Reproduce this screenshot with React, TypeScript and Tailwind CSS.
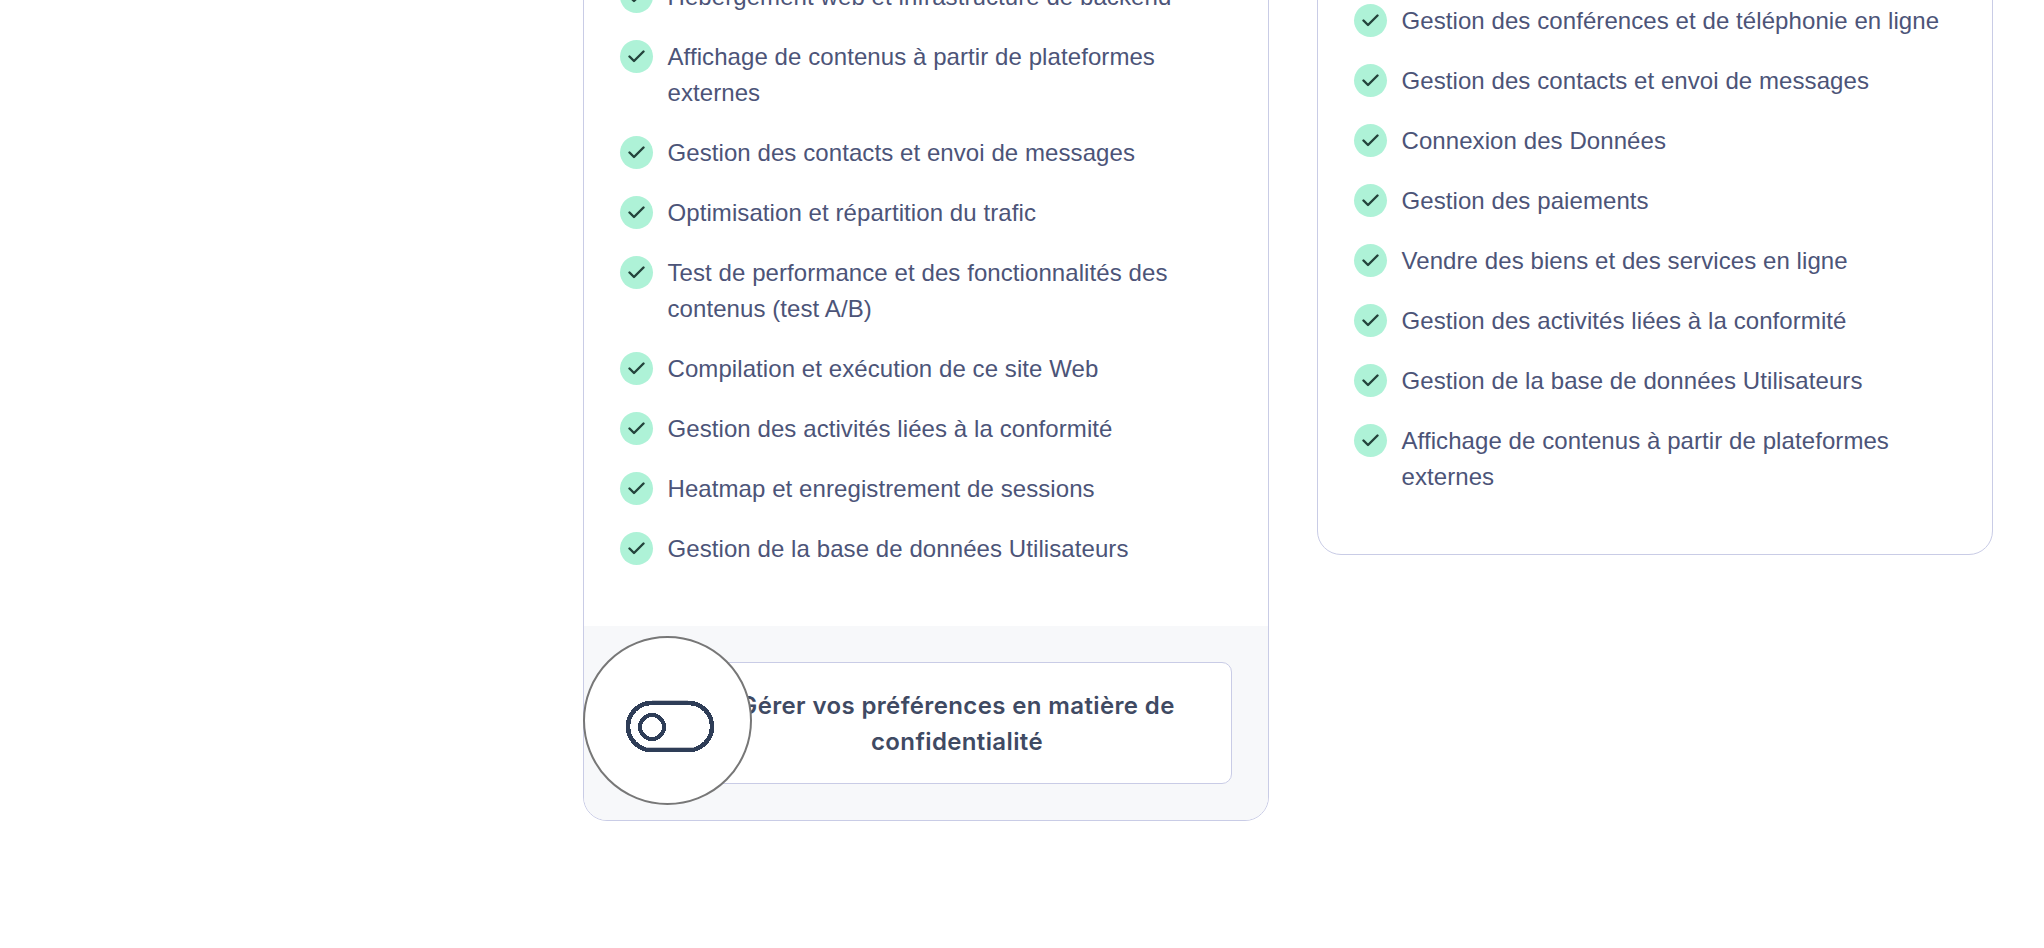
const leftItems = [
  'Hébergement web et infrastructure de backend',
  'Affichage de contenus à partir de plateformes externes',
  'Gestion des contacts et envoi de messages',
  'Optimisation et répartition du trafic',
  'Test de performance et des fonctionnalités des contenus (test A/B)',
  'Compilation et exécution de ce site Web',
  'Gestion des activités liées à la conformité',
  'Heatmap et enregistrement de sessions',
  'Gestion de la base de données Utilisateurs',
]

const rightItems = [
  'Gestion des conférences et de téléphonie en ligne',
  'Gestion des contacts et envoi de messages',
  'Connexion des Données',
  'Gestion des paiements',
  'Vendre des biens et des services en ligne',
  'Gestion des activités liées à la conformité',
  'Gestion de la base de données Utilisateurs',
  'Affichage de contenus à partir de plateformes externes',
]

function CheckItem({ label }: { label: string }) {
  return (
    <li className="flex items-start gap-[14.5px]">
      <span className="mt-px flex h-[33px] w-[33px] shrink-0 items-center justify-center rounded-full bg-[#aef2d7]">
        <svg width="17" height="13" viewBox="0 0 17 13" fill="none">
          <path d="M1.5 6.5 6 11 15.5 1.5" stroke="#24443c" strokeWidth="2.4" strokeLinecap="round" strokeLinejoin="round" />
        </svg>
      </span>
      <span>{label}</span>
    </li>
  )
}

function ToggleBubble() {
  return (
    <div className="absolute left-[583px] top-[636px] flex h-[169px] w-[169px] items-center justify-center rounded-full border-[2.5px] border-[#777777] bg-white">
      <svg className="ml-[5px] mt-[11px]" width="88" height="53" viewBox="0 0 88 53" fill="none" shapeRendering="crispEdges">
        <rect x="2" y="3" width="84" height="47" rx="23.5" stroke="#2e3d57" strokeWidth="4.5" />
        <circle cx="26" cy="27" r="12" stroke="#2e3d57" strokeWidth="4" />
        <rect x="26" y="0" width="36" height="1" fill="#c4c6cc" />
        <rect x="20" y="47" width="48" height="1" fill="#c4c6cc" />
      </svg>
    </div>
  )
}

export default function App() {
  return (
    <div className="relative h-[948px] overflow-hidden bg-white font-['Liberation_Sans',sans-serif] text-[24px] leading-9 tracking-[0.08px] text-[#4c5478]">
      <main className="-mt-[100px] flex items-start gap-[48px] pl-[583px]">
        <section className="w-[686px] overflow-hidden rounded-b-[24px] border border-[#c9cce6]">
          <ul className="flex flex-col gap-6 px-9 pb-[59px] pt-[78px]">
            {leftItems.map((item) => (
              <CheckItem key={item} label={item} />
            ))}
          </ul>
          <div className="bg-[#f7f8fa] p-9">
            <button className="w-full rounded-[10px] border border-[#c9cce6] bg-white pb-[23px] pl-[102px] pr-[40px] pt-[25px] font-['Inter',sans-serif] text-[24px] font-semibold tracking-[0.37px] text-[#3f4a63]">
              Gérer vos préférences en matière de confidentialité
            </button>
          </div>
        </section>
        <section className="w-[676px] rounded-b-[24px] border border-[#c9cce6]">
          <ul className="flex flex-col gap-6 px-9 pb-[59px] pt-[102px]">
            {rightItems.map((item) => (
              <CheckItem key={item} label={item} />
            ))}
          </ul>
        </section>
      </main>
      <ToggleBubble />
    </div>
  )
}
